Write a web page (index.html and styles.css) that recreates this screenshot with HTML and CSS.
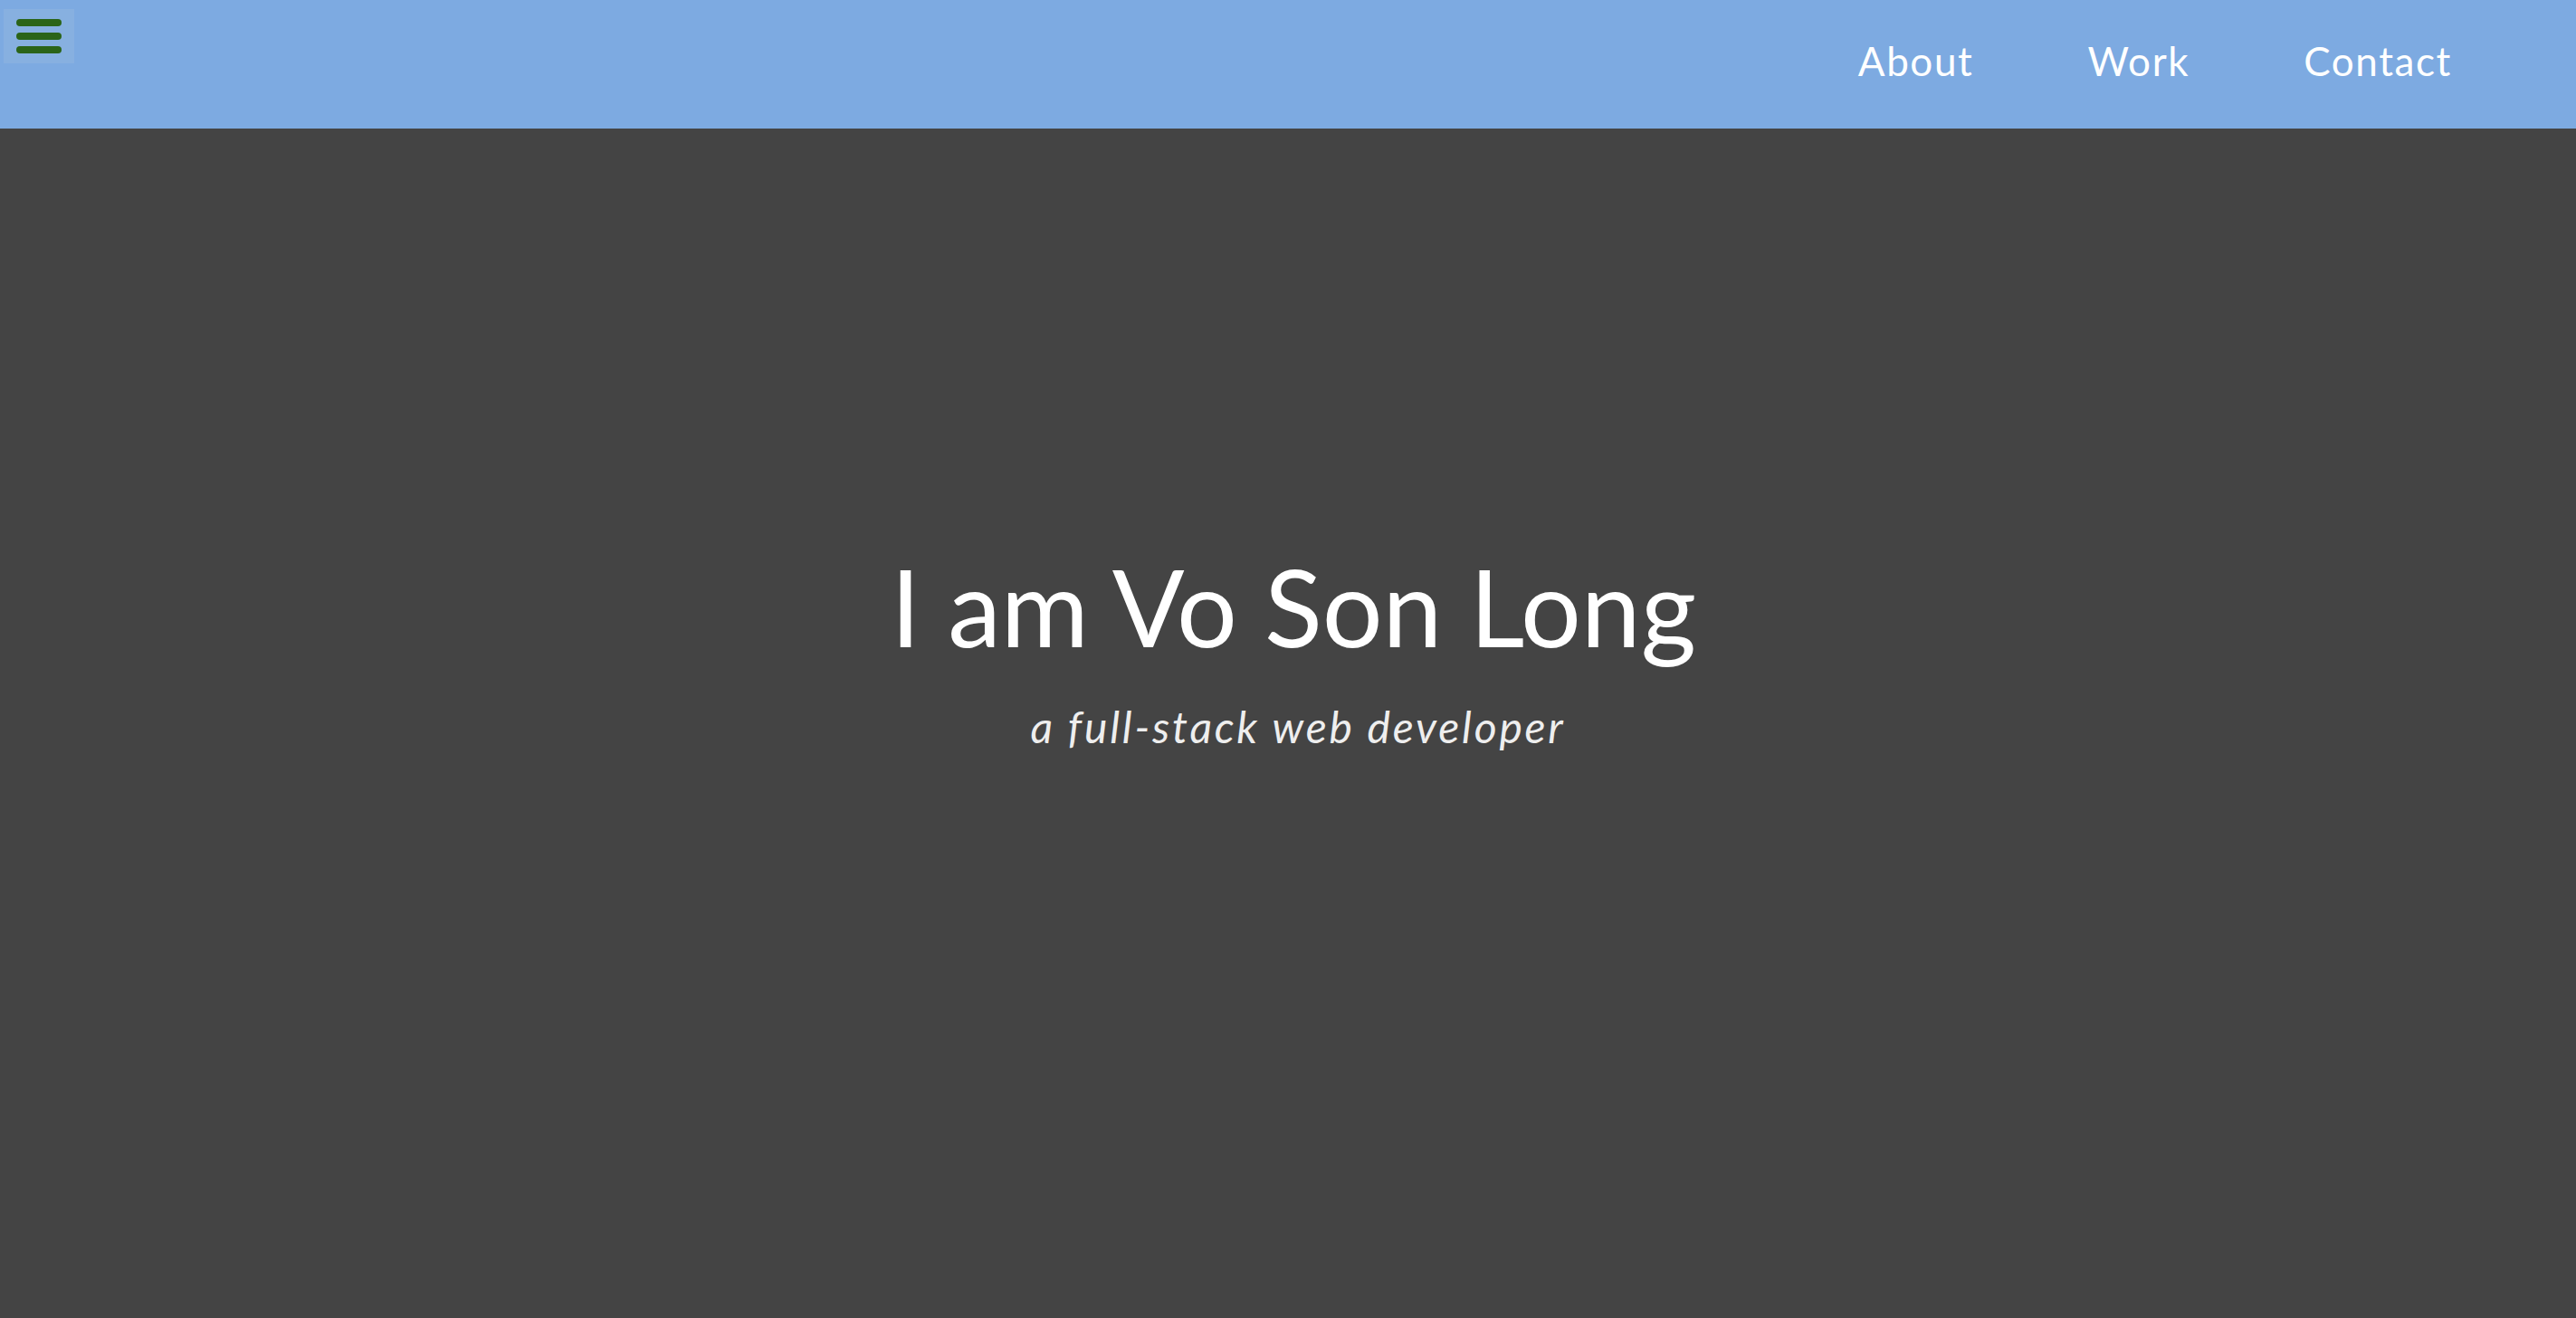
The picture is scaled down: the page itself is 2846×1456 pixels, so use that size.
FILE: index.html
```html
<!DOCTYPE html>
<html lang="en">
<head>
<meta charset="utf-8">
<title>Vo Son Long</title>
<link rel="stylesheet" href="styles.css">
</head>
<body>
<header class="topbar">
  <button class="menu-btn" aria-label="Menu">
    <span class="bar"></span>
    <span class="bar"></span>
    <span class="bar"></span>
  </button>
  <nav class="nav">
    <a class="nav-link" href="#about">About</a>
    <a class="nav-link" href="#work">Work</a>
    <a class="nav-link" href="#contact">Contact</a>
  </nav>
</header>
<main class="hero">
  <h1 class="hero-title">I am Vo Son Long</h1>
  <p class="hero-sub">a full-stack web developer</p>
</main>
</body>
</html>
```
FILE: styles.css
```css
* { box-sizing: border-box; }
html, body { margin: 0; padding: 0; height: 100%; }
body {
  background: #444444;
  font-family: "Lato", "Open Sans", "Liberation Sans", sans-serif;
  color: #ffffff;
  display: flex;
  flex-direction: column;
  overflow: hidden;
}
.topbar {
  height: 142px;
  flex: 0 0 142px;
  background: #7daae1;
  display: flex;
  align-items: flex-start;
  justify-content: space-between;
}
.menu-btn {
  margin: 10px 0 0 4px;
  width: 78px;
  height: 60px;
  padding: 11px 14px;
  border: none;
  background: #87b0e0;
  display: flex;
  flex-direction: column;
  justify-content: space-between;
  cursor: pointer;
}
.bar {
  display: block;
  width: 50px;
  height: 8px;
  border-radius: 4px;
  background: #2b6418;
}
.nav {
  display: flex;
  gap: 126px;
  padding-right: 137px;
  height: 142px;
  align-items: center;
}
.nav-link {
  color: #ffffff;
  text-decoration: none;
  font-size: 44px;
  letter-spacing: 1.6px;
  line-height: 1;
  padding-bottom: 8px;
}
.hero {
  flex: 1;
  display: flex;
  flex-direction: column;
  align-items: center;
  justify-content: center;
  padding-bottom: 167px;
  padding-left: 12px;
}
.hero-title {
  margin: 0;
  font-weight: 400;
  font-size: 118px;
  line-height: 1.2;
}
.hero-sub {
  margin: 33px 0 0;
  padding-left: 10px;
  font-style: italic;
  font-size: 48px;
  letter-spacing: 2.8px;
  color: #eeeeee;
  line-height: 1.2;
}
```
